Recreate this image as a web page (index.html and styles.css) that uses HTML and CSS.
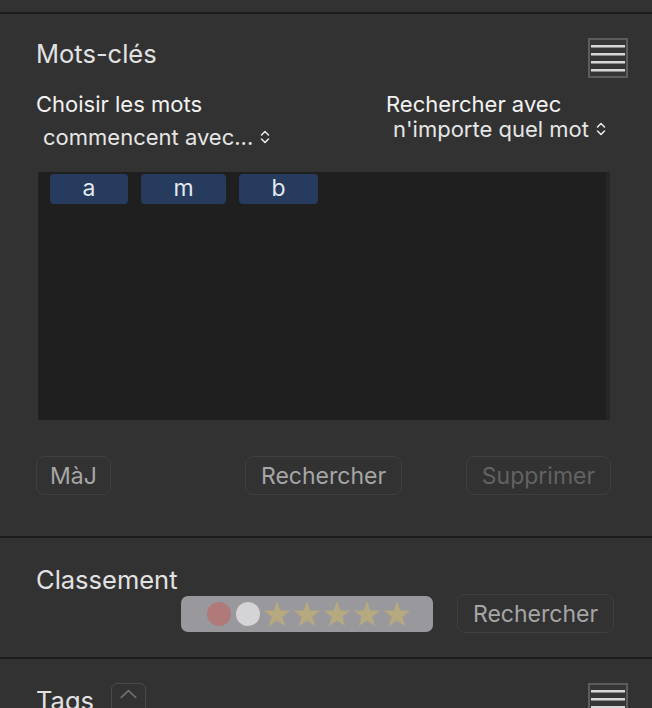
FILE: index.html
```html
<!DOCTYPE html>
<html lang="fr">
<head>
<meta charset="utf-8">
<title>Mots-clés</title>
<link rel="stylesheet" href="styles.css">
</head>
<body>
<div class="top-gap"></div>
<div class="divider"></div>

<section class="keywords">
  <div class="header-row">
    <h2 class="title">Mots-clés</h2>
    <div class="menu-icon"><span></span><span></span><span></span><span></span></div>
  </div>

  <div class="options">
    <div class="opt-col opt-left">
      <div class="label">Choisir les mots</div>
      <div class="select select-left">commencent avec...
        <svg class="updown" viewBox="0 0 10 16" width="10" height="16"><path d="M1.5 6 L5 2.5 L8.5 6 M1.5 10 L5 13.5 L8.5 10" fill="none" stroke="#e6e6e6" stroke-width="1.6" stroke-linecap="round" stroke-linejoin="round"/></svg>
      </div>
    </div>
    <div class="opt-col opt-right">
      <div class="label">Rechercher avec</div>
      <div class="select select-right">n'importe quel mot
        <svg class="updown" viewBox="0 0 10 16" width="10" height="16"><path d="M1.5 6 L5 2.5 L8.5 6 M1.5 10 L5 13.5 L8.5 10" fill="none" stroke="#e6e6e6" stroke-width="1.6" stroke-linecap="round" stroke-linejoin="round"/></svg>
      </div>
    </div>
  </div>

  <div class="word-box">
    <div class="chips">
      <span class="chip">a</span>
      <span class="chip">m</span>
      <span class="chip">b</span>
    </div>
    <div class="scroll-strip"></div>
  </div>

  <div class="button-row">
    <button class="btn btn-maj">MàJ</button>
    <button class="btn btn-mid">Rechercher</button>
    <button class="btn btn-disabled">Supprimer</button>
  </div>
</section>

<div class="divider"></div>

<section class="ranking">
  <h2 class="title">Classement</h2>
  <div class="rank-row">
    <div class="rating">
      <span class="dot dot-red"></span>
      <span class="dot dot-white"></span>
      <svg class="star" viewBox="0 0 28 28" width="28" height="28"><polygon points="14,1 17.3,10.4 27.3,10.6 19.4,16.7 22.2,26.3 14,20.6 5.8,26.3 8.6,16.7 0.7,10.6 10.7,10.4" fill="#b6a87f"/></svg>
      <svg class="star" viewBox="0 0 28 28" width="28" height="28"><polygon points="14,1 17.3,10.4 27.3,10.6 19.4,16.7 22.2,26.3 14,20.6 5.8,26.3 8.6,16.7 0.7,10.6 10.7,10.4" fill="#b6a87f"/></svg>
      <svg class="star" viewBox="0 0 28 28" width="28" height="28"><polygon points="14,1 17.3,10.4 27.3,10.6 19.4,16.7 22.2,26.3 14,20.6 5.8,26.3 8.6,16.7 0.7,10.6 10.7,10.4" fill="#b6a87f"/></svg>
      <svg class="star" viewBox="0 0 28 28" width="28" height="28"><polygon points="14,1 17.3,10.4 27.3,10.6 19.4,16.7 22.2,26.3 14,20.6 5.8,26.3 8.6,16.7 0.7,10.6 10.7,10.4" fill="#b6a87f"/></svg>
      <svg class="star" viewBox="0 0 28 28" width="28" height="28"><polygon points="14,1 17.3,10.4 27.3,10.6 19.4,16.7 22.2,26.3 14,20.6 5.8,26.3 8.6,16.7 0.7,10.6 10.7,10.4" fill="#b6a87f"/></svg>
    </div>
    <button class="btn btn-rank">Rechercher</button>
  </div>
</section>

<div class="divider"></div>

<section class="tags">
  <div class="tags-row">
    <h2 class="title">Tags</h2>
    <div class="collapse-btn">
      <svg viewBox="0 0 34 24" width="34" height="24"><path d="M9 16 L17 8.5 L25 16" fill="none" stroke="#6e6e6e" stroke-width="1.8"/></svg>
    </div>
    <div class="spacer"></div>
    <div class="menu-icon"><span></span><span></span><span></span><span></span></div>
  </div>
</section>
</body>
</html>
```

FILE: styles.css
```css
html, body {
  margin: 0;
  padding: 0;
  background: #323232;
  height: 708px;
  overflow: hidden;
}
body {
  font-family: Inter, "Liberation Sans", Arial, sans-serif;
  color: #e8e8e8;
}
.top-gap {
  height: 12px;
}
.divider {
  height: 2px;
  background: #1b1b1b;
}
.title {
  margin: 0;
  font-weight: 400;
  font-size: 25.5px;
  line-height: 28px;
  color: #e2e2e2;
}

/* Keywords */
.keywords {
  padding: 0 24px 0 36px;
}
.header-row {
  display: flex;
  align-items: flex-start;
  justify-content: space-between;
  margin-top: 24px;
  height: 40px;
}
.header-row .title {
  margin-top: 2px;
}
.menu-icon {
  box-sizing: border-box;
  width: 40px;
  height: 40px;
  border: 2px solid #5c5c5c;
  background: #353535;
  display: flex;
  flex-direction: column;
  justify-content: center;
  align-items: center;
  gap: 6px;
}
.menu-icon span {
  display: block;
  width: 34px;
  height: 2px;
  background: #d6d6d6;
  box-shadow: 0 1px 0 #8a8a8a;
}
.options {
  display: flex;
  margin-top: 14px;
}
.opt-col {
  display: flex;
  flex-direction: column;
}
.opt-left {
  width: 350px;
}
.label {
  font-size: 22px;
  line-height: 24px;
  color: #f2f2f2;
}
.select {
  display: flex;
  align-items: center;
  gap: 7px;
  font-size: 22px;
  line-height: 24px;
  color: #e6e6e6;
}
.select-left {
  margin-top: 9px;
  padding-left: 7px;
}
.select-right {
  margin-top: 1px;
  padding-left: 7px;
}
.updown {
  flex: none;
}
.word-box {
  margin-top: 23px;
  margin-right: 18px;
  margin-left: 2px;
  height: 248px;
  background: #1f1f1f;
  display: flex;
}
.chips {
  flex: 1;
  display: flex;
  align-items: flex-start;
  gap: 13px;
  padding: 2px 0 0 12px;
}
.chip {
  height: 30px;
  padding: 0 32.5px;
  border-radius: 4px;
  background: #263b5e;
  color: #e4e8f0;
  font-size: 23px;
  line-height: 29px;
}
.scroll-strip {
  width: 4px;
  background: #262626;
}
.button-row {
  display: flex;
  justify-content: flex-start;
  margin: 36px 17px 0 0;
  padding-bottom: 41px;
}
.btn {
  box-sizing: border-box;
  height: 39px;
  padding: 0 14px;
  border: 1.5px solid #3f3f3f;
  border-radius: 8px;
  background: #323232;
  color: #a6a6a6;
  font-family: Inter, "Liberation Sans", Arial, sans-serif;
  font-size: 23px;
  line-height: 36px;
}
.btn-maj {
  width: 75px;
  padding: 0;
}
.btn-mid {
  margin-left: 134px;
  width: 157px;
  padding: 0;
}
.btn-disabled {
  margin-left: auto;
  width: 145px;
  padding: 0;
  color: #626262;
}

/* Ranking */
.ranking {
  padding: 28px 38px 24px 36px;
}
.rank-row {
  display: flex;
  justify-content: flex-end;
  align-items: center;
  gap: 24px;
}
.rating {
  box-sizing: border-box;
  width: 252px;
  height: 36px;
  border-radius: 7px;
  background: #99989d;
  display: flex;
  align-items: center;
  padding-left: 26px;
  gap: 2px;
}
.dot {
  width: 24px;
  height: 24px;
  border-radius: 50%;
  flex: none;
}
.dot-red {
  background: #b07a7b;
  margin-right: 3px;
}
.dot-white {
  background: #d4d4d6;
  margin-right: 1px;
}
.star {
  flex: none;
}
.btn-rank {
  width: 157px;
}

/* Tags */
.tags {
  padding: 24px 24px 0 36px;
}
.tags-row {
  display: flex;
  align-items: flex-start;
}
.tags-row .title {
  margin-top: 4px;
}
.collapse-btn {
  box-sizing: border-box;
  margin-left: 17px;
  width: 35px;
  height: 34px;
  border: 1.5px solid #4a4a4a;
  border-radius: 6px;
  display: flex;
  justify-content: center;
}
.collapse-btn svg {
  margin-top: -2px;
}
.spacer {
  flex: 1;
}
```
